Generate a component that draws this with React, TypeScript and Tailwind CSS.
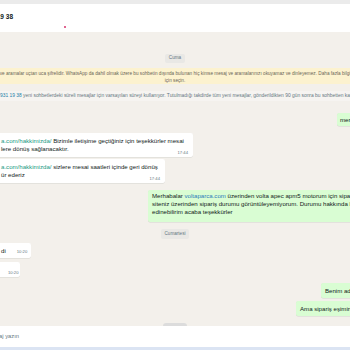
const bubbleShadow = "shadow-[0_0.5px_0.5px_rgba(11,20,26,0.13)]";

const App = () => {
  return (
    <div className="w-[350px] h-[350px] overflow-hidden flex flex-col bg-white font-['Liberation_Sans',Arial,sans-serif] text-[#111b21]">
      <div className="h-[4px] shrink-0 bg-[#ebebeb]" />

      {/* Header */}
      <header className="relative h-[28px] shrink-0 bg-white flex items-center">
        <div className="w-[13px] flex justify-end -mt-[2px]">
          <span className="shrink-0 whitespace-nowrap text-[6.5px] font-bold">+90 531 931 19 38</span>
        </div>
        <span className="absolute left-[64px] top-[22px] w-[2px] h-[2px] rounded-full bg-[#d6336c]" />
      </header>

      {/* Chat */}
      <main className="relative flex-1 bg-[#f3f0eb] flex flex-col">
        <div className="self-center mt-[22px] h-[9px] px-[4px] flex items-center rounded-[2px] bg-[#e9e8e5] text-[4.6px] text-[#667781]">
          Cuma
        </div>

        <div className="mt-[5px] h-[16px] pt-[1.5px] bg-[#fcf2cf] text-[4.7px] leading-[7px] text-[#6b6658]">
          <div className="flex justify-center">
            <span className="shrink-0 whitespace-nowrap">
              Mesajlar ve aramalar uçtan uca şifrelidir. WhatsApp da dahil olmak üzere bu sohbetin dışında bulunan hiç kimse mesaj ve aramalarınızı okuyamaz ve dinleyemez. Daha fazla bilgi edinmek
            </span>
          </div>
          <div className="flex justify-center">
            <span className="shrink-0 whitespace-nowrap">için seçin.</span>
          </div>
        </div>

        <div className="mt-[7px] h-[10px] flex items-center bg-[#f6f4f1] text-[4.9px] text-[#667781] whitespace-nowrap">
          <span className="text-[#1f7fa8]">931 19 38</span>
          <span>&nbsp;yeni sohbetlerdeki süreli mesajlar için varsayılan süreyi kullanıyor. Tutulmadığı takdirde tüm yeni mesajlar, gönderildikten 90 gün sonra bu sohbetten kaybolacak.</span>
        </div>

        <div className="flex mt-[12px]">
          <div className={`ml-[337px] h-[13px] pl-[3px] pr-[8px] flex items-center rounded-l-[2px] bg-[#d9fdd3] text-[6.1px] whitespace-nowrap ${bubbleShadow}`}>
            merhabalar
          </div>
        </div>

        <div className={`mt-[7px] w-[193px] pl-[1px] pr-[5px] pt-[4px] pb-[2px] rounded-r-[2px] bg-white text-[6.1px] leading-[7.5px] whitespace-nowrap ${bubbleShadow}`}>
          <div>
            <span className="text-[#1a9a84]">a.com/hakkimizda/</span> Bizimle iletişime geçtiğiniz için teşekkürler mesai
          </div>
          <div>lere dönüş sağlanacaktır.</div>
          <div className="-mt-[2px] h-[5px] leading-[5px] text-right text-[4.2px] text-[#667781]">17:44</div>
        </div>

        <div className={`mt-[2px] w-[165px] pl-[1px] pr-[5px] pt-[4px] pb-[2px] rounded-r-[2px] bg-white text-[6.1px] leading-[7.5px] whitespace-nowrap ${bubbleShadow}`}>
          <div>
            <span className="text-[#1a9a84]">a.com/hakkimizda/</span> sizlere mesai saatleri içinde geri dönüş
          </div>
          <div>ür ederiz</div>
          <div className="-mt-[2px] h-[5px] leading-[5px] text-right text-[4.2px] text-[#667781]">17:44</div>
        </div>

        <div className="flex mt-[7px]">
          <div className={`ml-[148px] pl-[4px] pr-[10px] pt-[2px] pb-[6px] rounded-l-[2px] bg-[#d9fdd3] text-[6.1px] leading-[8px] whitespace-nowrap ${bubbleShadow}`}>
            <div>
              Merhabalar <span className="text-[#2b7bb9]">voltaparca.com</span> üzerinden volta apec apm5 motorum için sipariş verdim
            </div>
            <div>siteniz üzerinden sipariş durumu görüntüleyemiyorum. Durumu hakkında bilgi</div>
            <div>edinebilirim acaba teşekkürler</div>
          </div>
        </div>

        <div className="self-center mt-[7px] h-[10px] px-[4px] flex items-center rounded-[2px] bg-[#e9e8e5] text-[4.6px] text-[#667781]">
          Cumartesi
        </div>

        <div className={`mt-[4px] self-start h-[15px] pl-[1px] pr-[4px] pt-[4px] flex rounded-r-[2px] bg-white ${bubbleShadow}`}>
          <span className="text-[6.1px] leading-[7.5px]">di</span>
          <span className="ml-[11px] mt-[1.5px] leading-[5px] text-[4.2px] text-[#667781]">10:20</span>
        </div>

        <div className={`mt-[4px] self-start h-[15px] pl-[8px] pr-[2px] pt-[7.5px] flex rounded-r-[2px] bg-white ${bubbleShadow}`}>
          <span className="leading-[5px] text-[4.2px] text-[#667781]">10:20</span>
        </div>

        <div className="flex mt-[6px]">
          <div className={`ml-[321px] h-[15px] pl-[4px] pr-[8px] flex items-center rounded-l-[2px] bg-[#d9fdd3] text-[6.1px] whitespace-nowrap ${bubbleShadow}`}>
            Benim adıma değil
          </div>
        </div>

        <div className="flex mt-[3px]">
          <div className={`ml-[296px] h-[15px] pl-[4px] pr-[8px] flex items-center rounded-l-[2px] bg-[#d9fdd3] text-[6.1px] whitespace-nowrap ${bubbleShadow}`}>
            Ama sipariş eşimin adına
          </div>
        </div>

        <span className="absolute bottom-0 left-[163px] w-[24px] h-[3px] rounded-t-full bg-[#dcdcdc]" />
      </main>

      {/* Composer */}
      <footer className="h-[21px] shrink-0 bg-white flex items-center">
        <div className="w-[19px] flex justify-end">
          <span className="shrink-0 whitespace-nowrap text-[5.8px] text-[#667781]">Bir mesaj yazın</span>
        </div>
      </footer>
      <div className="h-[3px] shrink-0 bg-[#dbe4f3]" />
    </div>
  );
};

export default App;
